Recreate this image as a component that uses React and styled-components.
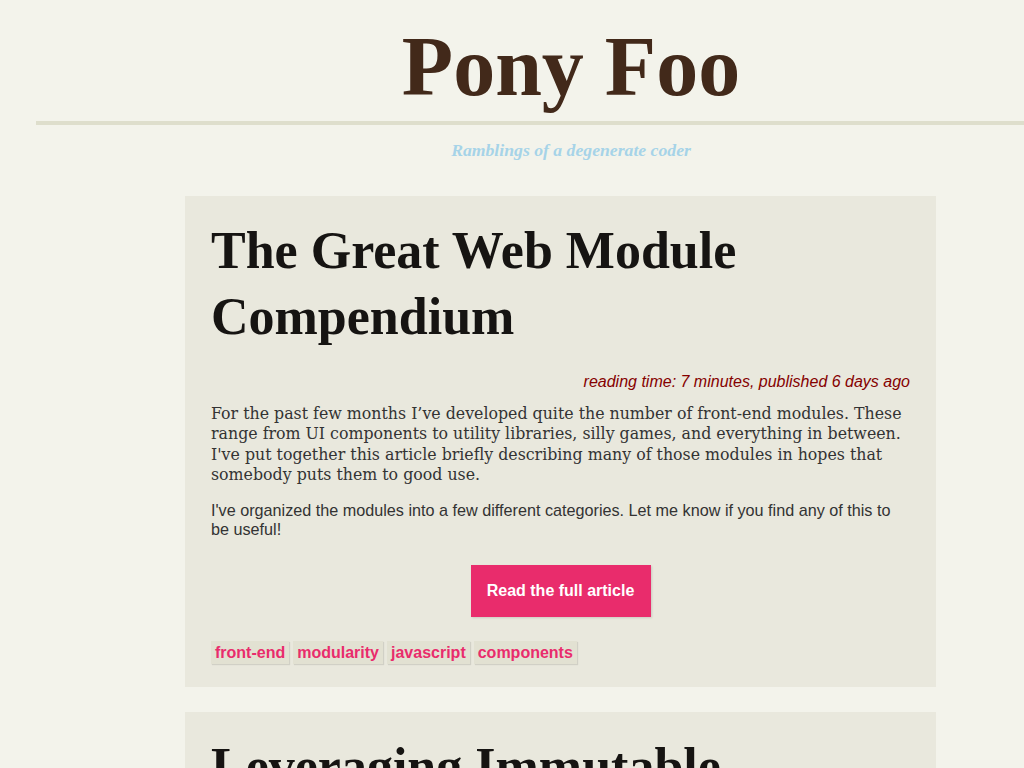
import React from "react";
import styled, { createGlobalStyle } from "styled-components";

const GlobalStyle = createGlobalStyle`
  html, body {
    margin: 0;
    padding: 0;
    background: #f3f3eb;
  }
  body {
    font-family: "Liberation Sans", Arial, sans-serif;
    overflow: hidden;
  }
`;

const Header = styled.header`
  margin-left: 36px;
  border-bottom: 4px solid #dedecc;
  text-align: center;
  padding-left: 82px;
`;

const SiteTitle = styled.h1`
  margin: 0;
  padding-top: 25px;
  padding-bottom: 12px;
  font-family: "Liberation Serif", "Times New Roman", serif;
  font-weight: bold;
  font-size: 84px;
  line-height: 84px;
  color: #42291a;
`;

const Tagline = styled.p`
  margin: 13px 0 0 118px;
  text-align: center;
  font-family: "Liberation Serif", "Times New Roman", serif;
  font-style: italic;
  font-weight: bold;
  font-size: 17.7px;
  line-height: 24px;
  color: #a6d3e8;
`;

const Main = styled.main`
  margin: 34px 0 0 185px;
  width: 751px;
  display: flex;
  flex-direction: column;
  gap: 25px;
`;

const Card = styled.article`
  background: #e9e8dd;
  padding: 22px 26px 23px 26px;
`;

const Title = styled.h2`
  margin: 0;
  font-family: "Liberation Serif", "Times New Roman", serif;
  font-weight: bold;
  font-size: 52px;
  line-height: 66px;
  color: #161412;
`;

const Meta = styled.p`
  margin: 22px 0 0;
  text-align: right;
  font-style: italic;
  font-size: 16px;
  line-height: 20px;
  color: #850000;
`;

const Lead = styled.p`
  margin: 12px 0 0;
  font-family: "DejaVu Serif", Georgia, serif;
  font-size: 15.8px;
  line-height: 20.4px;
  color: #333;
`;

const Body = styled.p`
  margin: 15px 0 0;
  font-size: 16.2px;
  line-height: 19.5px;
  color: #333;
`;

const Actions = styled.div`
  display: flex;
  justify-content: center;
  margin-top: 25px;
`;

const ReadButton = styled.a`
  display: flex;
  align-items: center;
  justify-content: center;
  width: 180px;
  height: 52px;
  background: #e92c6c;
  color: #fff;
  font-weight: bold;
  font-size: 16px;
  text-decoration: none;
  box-shadow: 1px 1px 2px rgba(0, 0, 0, 0.12);
`;

const Tags = styled.ul`
  list-style: none;
  margin: 24px 0 0;
  padding: 0;
  display: flex;
  gap: 4px;
`;

const Tag = styled.li`
  background: #e2e1d2;
  color: #e92c6c;
  font-weight: bold;
  font-size: 16px;
  line-height: 23px;
  padding: 0 4px;
  box-shadow: 1px 1px 1px rgba(0, 0, 0, 0.1);
`;

const posts = [
  {
    title: "The Great Web Module Compendium",
    meta: "reading time: 7 minutes, published 6 days ago",
    lead:
      "For the past few months I’ve developed quite the number of front-end modules. These range from UI components to utility libraries, silly games, and everything in between. I've put together this article briefly describing many of those modules in hopes that somebody puts them to good use.",
    body:
      "I've organized the modules into a few different categories. Let me know if you find any of this to be useful!",
    tags: ["front-end", "modularity", "javascript", "components"],
  },
  {
    title: "Leveraging Immutable Structures",
    meta: "reading time: 5 minutes, published 2 weeks ago",
    lead: "",
    body: "",
    tags: [],
  },
];

export default function App() {
  return (
    <>
      <GlobalStyle />
      <Header>
        <SiteTitle>Pony Foo</SiteTitle>
      </Header>
      <Tagline>Ramblings of a degenerate coder</Tagline>
      <Main>
        {posts.map((p) => (
          <Card key={p.title}>
            <Title>{p.title}</Title>
            <Meta>{p.meta}</Meta>
            <Lead>{p.lead}</Lead>
            <Body>{p.body}</Body>
            <Actions>
              <ReadButton href="#">Read the full article</ReadButton>
            </Actions>
            <Tags>
              {p.tags.map((t) => (
                <Tag key={t}>{t}</Tag>
              ))}
            </Tags>
          </Card>
        ))}
      </Main>
    </>
  );
}
